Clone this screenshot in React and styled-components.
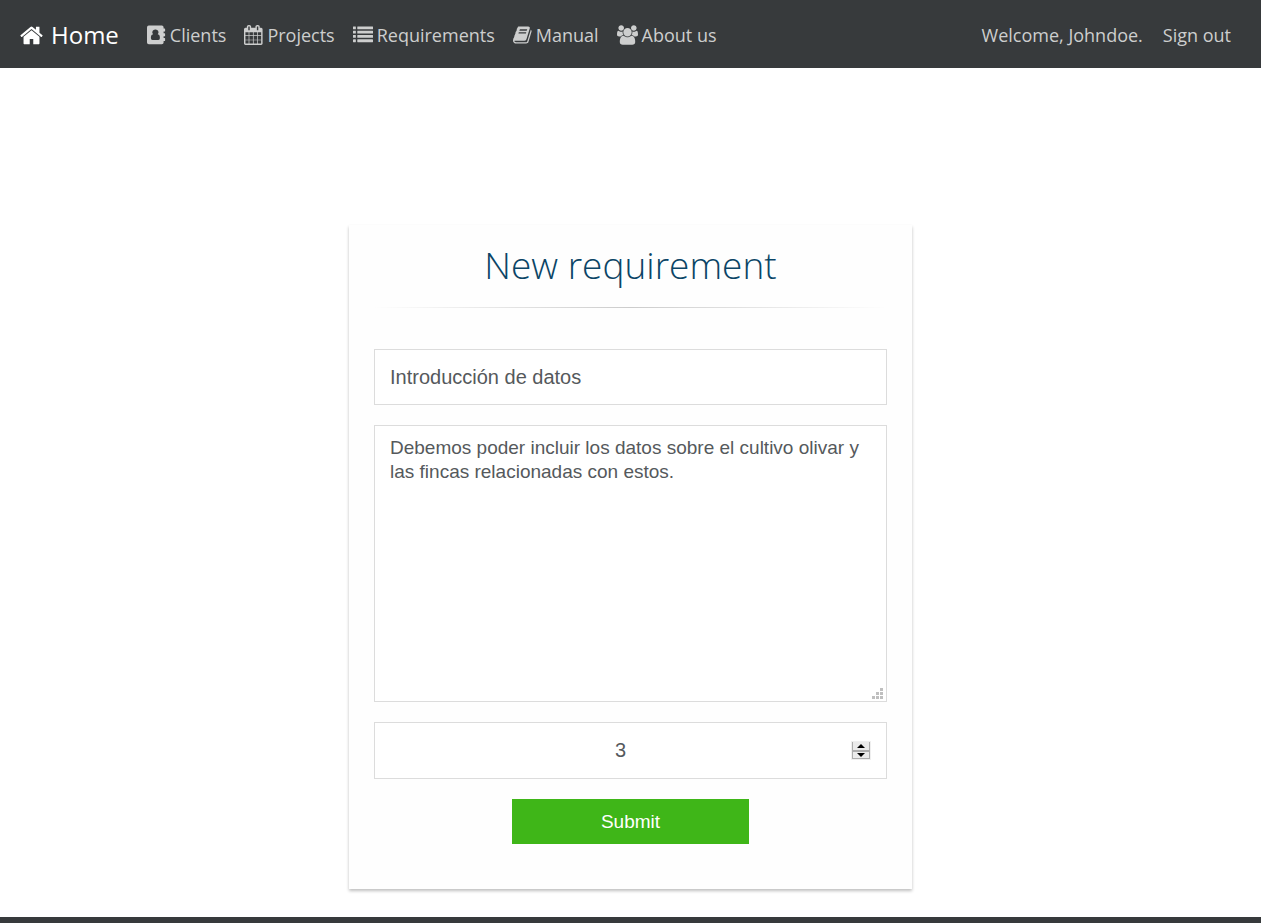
import React, { useState } from "react";
import styled, { createGlobalStyle } from "styled-components";

const GlobalStyle = createGlobalStyle`
  *, *::before, *::after { box-sizing: border-box; }
  body {
    margin: 0;
    background: #fff;
    font-family: "Segoe UI", "Open Sans", "Noto Sans", sans-serif;
  }
`;

const Page = styled.div`
  display: flex;
  flex-direction: column;
  min-height: 100vh;
`;

const Navbar = styled.header`
  display: flex;
  align-items: center;
  height: 68px;
  padding: 2px 30px 0 20px;
  background: #373a3c;
  white-space: nowrap;
`;

const Brand = styled.a`
  display: flex;
  align-items: center;
  gap: 8px;
  margin-right: 28px;
  color: #fff;
  font-size: 24px;
  line-height: 36px;
  text-decoration: none;
`;

const NavList = styled.nav`
  display: flex;
  align-items: center;
  gap: ${(p) => (p.$end ? 20 : 18)}px;
  margin-left: ${(p) => (p.$end ? "auto" : "0")};
`;

const NavLink = styled.a`
  display: flex;
  align-items: center;
  gap: 4px;
  color: #cdcece;
  font-size: 18px;
  line-height: 28px;
  text-decoration: none;
`;

const Icon = styled.svg`
  display: block;
  flex: none;
  height: ${(p) => p.$size}px;
  width: ${(p) => p.$width}px;
  fill: currentColor;
`;

const Main = styled.main`
  flex: none;
  padding: 157px 20px 28px;
`;

const Card = styled.form`
  display: flex;
  flex-direction: column;
  align-items: center;
  gap: 20px;
  max-width: 563px;
  margin: 0 auto;
  padding: 15px 25px 45px;
  background: #fefefe;
  box-shadow: 0 2px 3px rgba(0, 0, 0, 0.25);
`;

const Title = styled.h1`
  margin: 0;
  color: #0b4566;
  font-size: 37px;
  font-weight: 300;
  line-height: 50px;
  text-align: center;
`;

const Divider = styled.hr`
  width: 100%;
  height: 1px;
  margin: -3px 0 21px;
  border: 0;
  background: linear-gradient(to right, transparent, #ccc, transparent);
`;

const controlText = `
  color: #55595c;
  font-family: "Liberation Sans", Arial, sans-serif;
`;

const TextInput = styled.input`
  ${controlText}
  width: 100%;
  height: 56px;
  padding: 0 15px;
  border: 1px solid #dcdcdc;
  background: #fff;
  font-size: 20px;
  outline: 0;
`;

const AreaBox = styled.div`
  position: relative;
  width: 100%;
`;

const TextArea = styled.textarea`
  ${controlText}
  display: block;
  width: 100%;
  height: 277px;
  padding: 10px 15px;
  border: 1px solid #dcdcdc;
  background: #fff;
  font-size: 19px;
  line-height: 24px;
  outline: 0;
  resize: none;
`;

const Grip = styled.svg`
  position: absolute;
  right: 4px;
  bottom: 3px;
  width: 11px;
  height: 11px;
  fill: #bfbfbf;
  pointer-events: none;
`;

const NumberBox = styled.div`
  display: flex;
  align-items: center;
  width: 100%;
  height: 57px;
  padding: 0 15px;
  border: 1px solid #dcdcdc;
  background: #fff;
`;

const NumberInput = styled.input`
  ${controlText}
  flex: 1;
  min-width: 0;
  padding: 0;
  border: 0;
  background: transparent;
  font-size: 20px;
  text-align: center;
  outline: 0;
  appearance: textfield;
  -moz-appearance: textfield;
  &::-webkit-inner-spin-button,
  &::-webkit-outer-spin-button { appearance: none; margin: 0; }
`;

const Stepper = styled.div`
  display: flex;
  flex-direction: column;
  width: 20px;
  padding: 1px;
  background: #efefef;
`;

const StepButton = styled.button`
  display: flex;
  align-items: center;
  justify-content: center;
  height: ${(p) => (p.$down ? 8 : 9)}px;
  padding: 0;
  border: 1px solid #adadad;
  border-top-width: ${(p) => (p.$down ? 1 : 0)}px;
  background: #ebebeb;
  svg { display: block; }
`;

const Submit = styled.button`
  width: 237px;
  height: 45px;
  padding: 0;
  border: 0;
  background: #3fb618;
  color: #fff;
  font-family: "Liberation Sans", Arial, sans-serif;
  font-size: 19px;
  cursor: pointer;
`;

const Footer = styled.footer`
  flex: 1;
  min-height: 6px;
  background: #373a3c;
`;

const HomeIcon = () => (
  <Icon viewBox="64 0 1664 1792" $width={23} $size={25} aria-hidden="true">
    <path d="M1472 992v480q0 26-19 45t-45 19h-384v-384h-256v384h-384q-26 0-45-19t-19-45v-480q0-1 .5-3t.5-3l575-474 575 474q1 2 1 6zm223-69l-62 74q-8 9-21 11h-3q-13 0-21-7l-692-577-692 577q-12 8-24 7-13-2-21-11l-62-74q-8-10-7-23.5t11-21.5l719-599q32-26 76-26t76 26l244 204v-195q0-14 9-23t23-9h192q14 0 23 9t9 23v408l219 182q10 8 11 21.5t-7 23.5z" />
  </Icon>
);

const AddressBookIcon = () => (
  <Icon viewBox="0 0 19 20" $width={19} $size={20} aria-hidden="true">
    <path
      fillRule="evenodd"
      d="M1.8 0.6H14.8Q16.600 0.6 16.600 2.400V3.600H17.600Q18.100 3.600 18.100 4.100V6.100Q18.100 6.600 17.600 6.600H16.600V8.300H17.600Q18.100 8.300 18.100 8.800V10.800Q18.100 11.300 17.600 11.300H16.600V13H17.600Q18.100 13 18.100 13.500V15.500Q18.100 16 17.600 16H16.600V17.500Q16.600 19.300 14.800 19.300H1.800Q0 19.300 0 17.500V2.400Q0 .6 1.800 .6ZM8.400 4.400A2.900 2.900 0 0 0 6.100 9.300C4.200 9.500 3.900 11.400 3.900 13Q3.900 14.900 5.400 14.900H11.400Q12.900 14.900 12.900 13C12.900 11.400 12.600 9.500 10.700 9.300A2.900 2.900 0 0 0 8.400 4.400Z"
    />
  </Icon>
);

const CalendarIcon = () => (
  <Icon viewBox="64 0 1702 1792" $width={19} $size={20} aria-hidden="true">
    <path d="M192 1664h288v-288h-288v288zm352 0h320v-288h-320v288zm-352-352h288v-320h-288v320zm352 0h320v-320h-320v320zm-352-384h288v-288h-288v288zm736 736h320v-288h-320v288zm-384-736h320v-288h-320v288zm768 736h288v-288h-288v288zm-384-352h320v-320h-320v320zm-352-864v-288q0-13-9.500-22.500t-22.500-9.500h-64q-13 0-22.500 9.500t-9.500 22.500v288q0 13 9.500 22.500t22.500 9.500h64q13 0 22.500-9.500t9.500-22.500zm736 864h288v-320h-288v320zm-384-384h320v-288h-320v288zm384 0h288v-288h-288v288zm32-480v-288q0-13-9.500-22.500t-22.500-9.500h-64q-13 0-22.500 9.500t-9.500 22.500v288q0 13 9.500 22.500t22.500 9.500h64q13 0 22.500-9.500t9.500-22.500zm384-64v1280q0 52-38 90t-90 38h-1408q-52 0-90-38t-38-90v-1280q0-52 38-90t90-38h128v-96q0-66 47-113t113-47h64q66 0 113 47t47 113v96h384v-96q0-66 47-113t113-47h64q66 0 113 47t47 113v96h128q52 0 90 38t38 90z" />
  </Icon>
);

const ListIcon = () => (
  <Icon viewBox="0 0 1792 1792" $width={20} $size={20} aria-hidden="true">
    {[128, 512, 896, 1280].map((y) => (
      <g key={y}>
        <rect x="0" y={y} width="256" height="256" rx="32" />
        <rect x="384" y={y} width="1408" height="256" rx="32" />
      </g>
    ))}
  </Icon>
);

const BookIcon = () => (
  <Icon viewBox="64 0 1702 1792" $width={19} $size={20} aria-hidden="true">
    <path d="M1703 478q40 57 18 129l-275 906q-19 64-76.5 107.5t-122.500 43.500h-923q-77 0-148.500-53.500t-99.500-131.500q-24-67-2-127 0-4 3-27t4-37q1-8-3-21.500t-3-19.500q2-11 8-21t16.500-23.500 16.500-23.500q23-38 45-91.500t30-91.500q3-10 .5-30t-.5-28q3-11 17-28t17-23q21-36 42-92t25-90q1-9-2.500-32t.5-28q4-13 22-30.500t22-22.500q19-26 42.500-84.500t27.500-96.500q1-8-3-25.500t-2-26.500q2-8 9-18t18-23 17-21q8-12 16.500-30.500t15-35 16-36 19.500-32 26.500-23.500 36-11.500 47.500 5.500l-1 3q38-9 51-9h761q74 0 114 56t18 130l-274 906q-36 119-71.500 153.500t-128.500 34.500h-869q-27 0-38 15-11 16-1 43 24 70 144 70h923q29 0 56-15.500t35-41.500l300-987q7-22 5-57 38 15 59 43zm-1064 2q-4 13 2 22.500t20 9.500h608q13 0 25.500-9.500t16.500-22.500l21-64q4-13-2-22.500t-20-9.500h-608q-13 0-25.500 9.500t-16.500 22.500zm-83 256q-4 13 2 22.500t20 9.500h608q13 0 25.500-9.500t16.500-22.500l21-64q4-13-2-22.500t-20-9.500h-608q-13 0-25.500 9.500t-16.500 22.500z" />
  </Icon>
);

const UsersIcon = () => (
  <Icon viewBox="-64 0 1920 1792" $width={21} $size={20} aria-hidden="true">
    <path d="M529 896q-162 5-265 128h-134q-82 0-138-40.500t-56-118.500q0-353 124-353 6 0 43.500 21t97.500 42.500 119 21.500q67 0 133-23-5 37-5 66 0 159 81 256zm1071 637q0 120-73 189.500t-194 69.500h-874q-121 0-194-69.500t-73-189.500q0-53 3.500-103.500t14-109 26.500-108.500 43-97.500 62-81 85.500-53.500 111.500-20q10 0 43 21.500t73 48 107 48 135 21.500 135-21.500 107-48 73-48 43-21.500q61 0 111.500 20t85.500 53.500 62 81 43 97.500 26.500 108.500 14 109 3.500 103.500zm-1024-1277q0 106-75 181t-181 75-181-75-75-181 75-181 181-75 181 75 75 181zm704 384q0 159-112.500 271.500t-271.500 112.500-271.500-112.500-112.500-271.500 112.500-271.500 271.500-112.500 271.500 112.500 112.500 271.500zm576 225q0 78-56 118.500t-138 40.500h-134q-103-123-265-128 81-97 81-256 0-29-5-66 66 23 133 23 59 0 119-21.500t97.500-42.500 43.500-21q124 0 124 353zm-128-609q0 106-75 181t-181 75-181-75-75-181 75-181 181-75 181 75 75 181z" />
  </Icon>
);

const links = [
  { label: "Clients", Glyph: AddressBookIcon },
  { label: "Projects", Glyph: CalendarIcon },
  { label: "Requirements", Glyph: ListIcon },
  { label: "Manual", Glyph: BookIcon },
  { label: "About us", Glyph: UsersIcon },
];

export default function App() {
  const [name, setName] = useState("Introducción de datos");
  const [description, setDescription] = useState(
    "Debemos poder incluir los datos sobre el cultivo olivar y las fincas relacionadas con estos."
  );
  const [priority, setPriority] = useState(3);

  return (
    <Page>
      <GlobalStyle />
      <Navbar>
        <Brand href="#home">
          <HomeIcon />
          <span>Home</span>
        </Brand>
        <NavList>
          {links.map(({ label, Glyph }) => (
            <NavLink key={label} href="#">
              <Glyph />
              <span>{label}</span>
            </NavLink>
          ))}
        </NavList>
        <NavList $end>
          <NavLink href="#profile">Welcome, Johndoe.</NavLink>
          <NavLink href="#signout">Sign out</NavLink>
        </NavList>
      </Navbar>
      <Main>
        <Card onSubmit={(e) => e.preventDefault()}>
          <Title>New requirement</Title>
          <Divider />
          <TextInput
            type="text"
            aria-label="Name"
            value={name}
            onChange={(e) => setName(e.target.value)}
          />
          <AreaBox>
            <TextArea
              aria-label="Description"
              spellCheck={false}
              value={description}
              onChange={(e) => setDescription(e.target.value)}
            />
            <Grip viewBox="0 0 11 11" aria-hidden="true">
              <path d="M8 0h3v3h-3zM4 4h3v3h-3zM8 4h3v3h-3zM0 8h3v3h-3zM4 8h3v3h-3zM8 8h3v3h-3z" />
            </Grip>
          </AreaBox>
          <NumberBox>
            <NumberInput
              type="number"
              aria-label="Priority"
              value={priority}
              onChange={(e) => setPriority(Number(e.target.value))}
            />
            <Stepper>
              <StepButton type="button" aria-label="Increase" onClick={() => setPriority(priority + 1)}>
                <svg width="8" height="4" viewBox="0 0 8 4"><path d="M4 0L8 4H0Z" /></svg>
              </StepButton>
              <StepButton $down type="button" aria-label="Decrease" onClick={() => setPriority(priority - 1)}>
                <svg width="8" height="4" viewBox="0 0 8 4"><path d="M0 0H8L4 4Z" /></svg>
              </StepButton>
            </Stepper>
          </NumberBox>
          <Submit type="submit">Submit</Submit>
        </Card>
      </Main>
      <Footer />
    </Page>
  );
}
